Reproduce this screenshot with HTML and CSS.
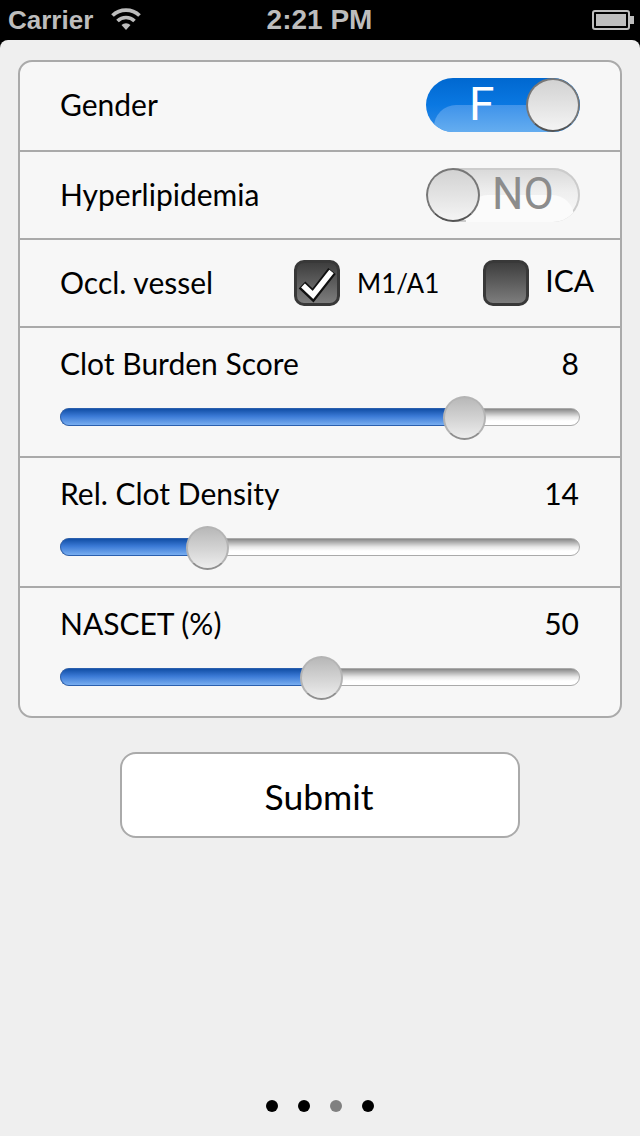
FILE: index.html
```html
<!DOCTYPE html>
<html lang="en">
<head>
<meta charset="utf-8">
<title>Form</title>
<link rel="stylesheet" href="styles.css">
</head>
<body>
<div class="phone">
  <header class="status">
    <div class="status-left">
      <span class="carrier">Carrier</span>
      <svg class="wifi" width="32" height="24" viewBox="0 0 32 24"><path d="M16 23 L11.5 18 A6.5 6.5 0 0 1 20.5 18 Z" fill="#bdbdbd"/><path d="M7.5 14 A12 12 0 0 1 24.5 14" fill="none" stroke="#bdbdbd" stroke-width="3.6"/><path d="M2.5 8.5 A19.5 19.5 0 0 1 29.5 8.5" fill="none" stroke="#bdbdbd" stroke-width="3.8"/></svg>
    </div>
    <span class="time">2:21 PM</span>
    <div class="battery"><div class="battery-body"><div class="battery-level"></div></div><div class="battery-tip"></div></div>
  </header>
  <main class="screen">
    <section class="card">
      <div class="row row-switch">
        <span class="label label-up">Gender</span>
        <div class="switch switch-on"><span class="switch-gloss"></span><span class="switch-text">F</span><span class="knob knob-right"></span></div>
      </div>
      <div class="row row-short">
        <span class="label label-tight">Hyperlipidemia</span>
        <div class="switch switch-off"><span class="switch-gloss"></span><span class="switch-text">NO</span><span class="knob knob-left"></span></div>
      </div>
      <div class="row row-short">
        <span class="label label-tight">Occl. vessel</span>
        <div class="checks">
          <div class="check-item">
            <span class="box"><svg width="40" height="40" viewBox="0 0 40 40"><path d="M5 22 L16 32.5 L35 8" fill="none" stroke="#111" stroke-width="9.5"/><path d="M6 22.5 L16 32 L34.5 8.5" fill="none" stroke="#fff" stroke-width="5.5"/></svg></span>
            <span class="check-label small">M1/A1</span>
          </div>
          <div class="check-item">
            <span class="box"></span>
            <span class="check-label raised">ICA</span>
          </div>
        </div>
      </div>
      <div class="row-slider">
        <div class="slider-head"><span class="label">Clot Burden Score</span><span class="label">8</span></div>
        <div class="track"><div class="fill" style="width:404px"></div><span class="thumb" style="left:382px"></span></div>
      </div>
      <div class="row-slider">
        <div class="slider-head"><span class="label">Rel. Clot Density</span><span class="label">14</span></div>
        <div class="track"><div class="fill" style="width:147px"></div><span class="thumb" style="left:125px"></span></div>
      </div>
      <div class="row-slider last">
        <div class="slider-head"><span class="label">NASCET (%)</span><span class="label">50</span></div>
        <div class="track"><div class="fill" style="width:261px"></div><span class="thumb" style="left:239px"></span></div>
      </div>
    </section>
    <button class="submit" type="button">Submit</button>
    <nav class="dots">
      <span class="dot"></span><span class="dot"></span><span class="dot dot-current"></span><span class="dot"></span>
    </nav>
  </main>
</div>
</body>
</html>
```
FILE: styles.css
```css
* { box-sizing: border-box; }
html, body { margin: 0; padding: 0; background: #000; }
.phone { width: 640px; height: 1136px; display: flex; flex-direction: column; overflow: hidden; }

.status { height: 40px; flex: none; background: #000; color: #bdbdbd; display: grid; grid-template-columns: 1fr auto 1fr; align-items: center; padding: 0 6px 0 8px; font-family: "Liberation Sans", Arial, sans-serif; font-weight: 700; font-size: 26px; }
.status-left { display: flex; align-items: center; gap: 17px; }
.carrier { font-size: 26px; line-height: 40px; }
.wifi { margin-top: -3px; }
.time { line-height: 40px; font-size: 28px; margin-left: -3px; margin-top: -1px; }
.battery { justify-self: end; display: flex; align-items: center; }
.battery-body { width: 38px; height: 20px; border: 2px solid #bdbdbd; border-radius: 3px; padding: 2px; }
.battery-level { width: 100%; height: 100%; background: #bdbdbd; }
.battery-tip { width: 4px; height: 8px; background: #bdbdbd; }

.screen { flex: 1; background: #efefef; border-radius: 8px 8px 0 0; display: flex; flex-direction: column; align-items: center; padding: 20px 18px 24px; }
.card { width: 604px; border: 2px solid #aaa; border-radius: 14px; background: #f7f7f7; font-family: Lato, sans-serif; overflow: hidden; }
.label { font-size: 30px; color: #000; line-height: 36px; margin-top: -1px; }
.row .label-tight { margin-top: -2px; }
.row .label-up { margin-top: -2px; }

.row { display: flex; align-items: center; justify-content: space-between; padding: 0 40px; border-bottom: 2px solid #aaa; }
.row-switch { height: 90px; padding-bottom: 2px; }
.row-short { height: 88px; }

.switch { position: relative; width: 154px; height: 54px; border-radius: 27px; overflow: hidden; font-family: Roboto, sans-serif; font-size: 46px; line-height: 52px; }
.switch-on { background: linear-gradient(#0068d0, #0a78e2 50%, #2f8ae6); color: #fff; }
.switch-off { background: linear-gradient(#d8d8d8, #efefef 45%, #fafafa); box-shadow: inset 0 0 0 2px #ccc; color: #8c8c8c; }
.switch-gloss { position: absolute; left: 8px; right: 8px; top: 27px; height: 40px; border-radius: 22px 22px 0 0; }
.switch-on .switch-gloss { background: linear-gradient(#3f93ea, #66aef0 70%); }
.switch-off .switch-gloss { background: #fbfbfb; left: 40px; right: 6px; top: 27px; }
.switch-text { position: absolute; top: 0; }
.switch-on .switch-text { left: 43px; font-weight: 400; }
.switch-off .switch-text { left: 66px; font-size: 44px; top: 0; }
.knob { position: absolute; top: 0; width: 54px; height: 54px; border-radius: 50%; border: 2px solid #777; border-bottom-color: #555; background: linear-gradient(#d2d2d2, #f4f4f4); }
.knob-right { right: 0; }
.knob-left { left: 0; }

.checks { display: flex; align-items: center; margin-right: -14px; }
.check-item { display: flex; align-items: center; }
.check-item + .check-item { margin-left: 45px; }
.box { width: 46px; height: 46px; border-radius: 10px; border: 3px solid #383838; background: linear-gradient(#3e3e3e, #7d7d7d); display: flex; align-items: center; justify-content: center; }
.box svg { flex: none; }
.check-label { color: #000; margin-left: 16px; line-height: 36px; }
.check-label.small { font-size: 26px; margin-top: -1px; margin-left: 17px; margin-right: -1px; }
.check-label.raised { font-size: 30px; margin-top: -7px; margin-left: 16px; }

.row-slider { height: 130px; padding: 18px 41px 0 40px; border-bottom: 2px solid #aaa; }
.row-slider.last { height: 128px; border-bottom: 0; }
.slider-head { display: flex; justify-content: space-between; }
.track { position: relative; height: 18px; margin-top: 27px; margin-right: -1px; border-radius: 9px; border: 1px solid #aaa; background: linear-gradient(#888, #e8e8e8 50%, #fff 75%, #fff); }
.fill { margin: -1px 0 0 -1px; height: 18px; border-radius: 9px 0 0 9px; border: 1px solid #2a5fae; border-right: 0; background: linear-gradient(#124fa6, #3b7ad6 45%, #79aef0); }
.thumb { position: absolute; top: -13px; width: 43px; height: 44px; border-radius: 50%; border: 2px solid #b4b4b4; border-bottom-color: #8f8f8f; background: linear-gradient(#b8b8b8, #ededed); }

.submit { width: 400px; height: 86px; margin-top: 34px; flex: none; border: 2px solid #aaa; border-radius: 16px; background: #fff; color: #000; font-family: Lato, sans-serif; font-size: 35.5px; padding: 3px 2px 0 0; }

.dots { margin-top: auto; display: flex; gap: 20px; }
.dot { width: 12px; height: 12px; border-radius: 50%; background: #000; }
.dot-current { background: #808080; }
```
